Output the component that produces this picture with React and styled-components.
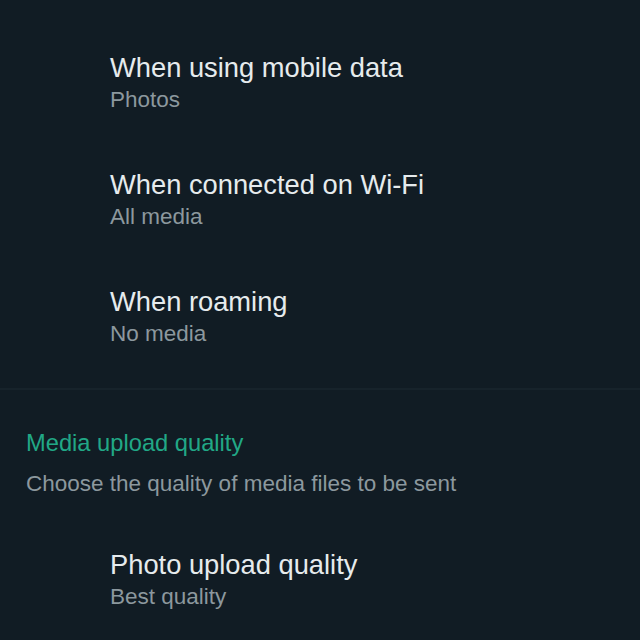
import React from "react";
import styled, { createGlobalStyle } from "styled-components";

const Global = createGlobalStyle`
  html, body { margin: 0; padding: 0; background: #111c24; }
  body { font-family: "Liberation Sans", Arial, sans-serif; -webkit-font-smoothing: antialiased; }
`;

const Page = styled.div`
  width: 640px;
  height: 640px;
  overflow: hidden;
  background: #111c24;
  display: flex;
  flex-direction: column;
  padding-top: 25px;
  box-sizing: border-box;
`;

const Group = styled.div`
  display: flex;
  flex-direction: column;
`;

const Item = styled.div`
  display: flex;
  flex-direction: column;
  padding: ${(p) => p.$top || 27}px 0 27px 110px;
  box-sizing: border-box;
`;

const Title = styled.div`
  font-size: 27.3px;
  line-height: 32px;
  color: #e6ebed;
`;

const Sub = styled.div`
  font-size: 22.5px;
  line-height: 31px;
  color: #8c989e;
`;

const Divider = styled.div`
  height: 2px;
  background: #17232b;
  margin-top: 12px;
`;

const Section = styled.div`
  display: flex;
  flex-direction: column;
  padding: 38px 0 0 26px;
  gap: 11px;
`;

const Header = styled.div`
  font-size: 23.7px;
  line-height: 30px;
  color: #21a886;
`;

const Desc = styled.div`
  font-size: 22.5px;
  line-height: 30px;
  color: #8c989e;
`;

const items = [
  ["When using mobile data", "Photos"],
  ["When connected on Wi-Fi", "All media"],
  ["When roaming", "No media"],
];

export default function App() {
  return (
    <Page>
      <Global />
      <Group>
        {items.map(([t, s]) => (
          <Item key={t}>
            <Title>{t}</Title>
            <Sub>{s}</Sub>
          </Item>
        ))}
      </Group>
      <Divider />
      <Section>
        <Header>Media upload quality</Header>
        <Desc>Choose the quality of media files to be sent</Desc>
      </Section>
      <Item $top={50}>
        <Title>Photo upload quality</Title>
        <Sub>Best quality</Sub>
      </Item>
    </Page>
  );
}
